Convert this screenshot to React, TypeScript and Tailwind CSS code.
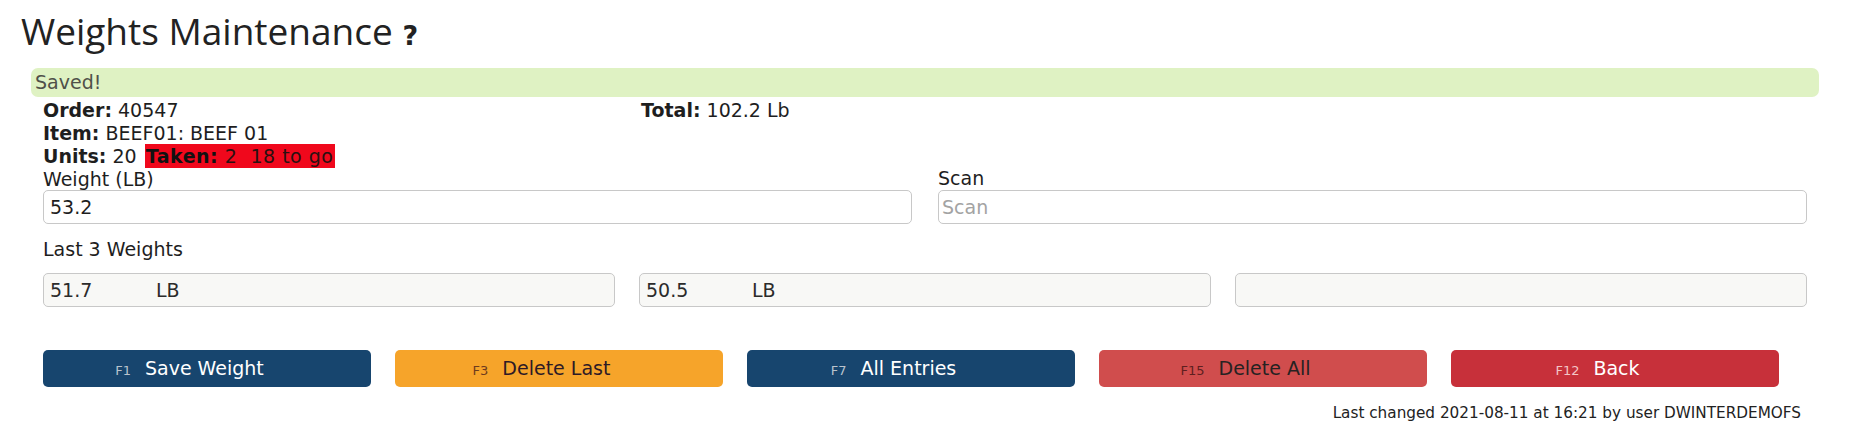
const BUTTONS = [
  { key: 'F1', label: 'Save Weight', bg: 'bg-[#17456e]', keyColor: 'text-[#b9c3cd]', text: 'text-white' },
  { key: 'F3', label: 'Delete Last', bg: 'bg-[#f6a42a]', keyColor: 'text-[#6e3b1e]', text: 'text-[#2e1a26]' },
  { key: 'F7', label: 'All Entries', bg: 'bg-[#17456e]', keyColor: 'text-[#b9c3cd]', text: 'text-white' },
  { key: 'F15', label: 'Delete All', bg: 'bg-[#d04d4d]', keyColor: 'text-[#5e1f1f]', text: 'text-[#262222]' },
  { key: 'F12', label: 'Back', bg: 'bg-[#c7303a]', keyColor: 'text-[#f3c6c6]', text: 'text-white' },
]

const LAST_WEIGHTS = ['51.7', '50.5', '']

export default function App() {
  return (
    <div className="w-[1856px] h-[421px] overflow-hidden bg-white font-['DejaVu_Sans',sans-serif] text-[19px] text-[#1e1e1e]">
      <h1 className="h-[61px] pl-[21px] font-['Open_Sans',sans-serif] text-[37px] leading-[61px] font-normal text-[#222]">
        Weights Maintenance{' '}
        <span className="font-['DejaVu_Sans',sans-serif] font-bold text-[27px] leading-none">?</span>
      </h1>

      <div className="ml-[31px] w-[1788px] mt-[7px]">
        <div className="h-[29px] rounded-[7px] bg-[#dff2c3] pl-[4px] text-[19px] leading-[29px] text-[#4f5049]">
          Saved!
        </div>

        <div className="px-[12px]">
          <div className="mt-[2px] leading-[23px]">
            <div className="flex">
              <div className="w-[598px]">
                <b>Order:</b> 40547
              </div>
              <div>
                <b>Total:</b> 102.2 Lb
              </div>
            </div>
            <div>
              <b>Item:</b> BEEF01: BEEF 01
            </div>
            <div>
              <b>Units:</b> 20{' '}
              <span className="ml-[2px] bg-[#f0081c] py-[1px] pl-[1px] pr-[2px] tracking-[0.5px] text-[#2a1010]">
                <b className="text-[#111]">Taken:</b> 2&nbsp; 18 to go
              </span>
            </div>
          </div>

          <div className="grid grid-cols-2 gap-x-[26px]">
            <label className="block">
              <span className="block leading-[22px]">Weight (LB)</span>
              <div className="h-[34px] rounded-[5px] border border-[#c8c8c8] bg-white pl-[6px] leading-[32px]">
                53.2
              </div>
            </label>
            <label className="block">
              <span className="block leading-[20px]">Scan</span>
              <div className="mt-[2px] h-[34px] rounded-[5px] border border-[#c8c8c8] bg-white pl-[3px] leading-[32px] text-[#a3a3a3]">
                Scan
              </div>
            </label>
          </div>

          <div className="mt-[14px] leading-[23px]">Last 3 Weights</div>
          <div className="mt-[12px] grid grid-cols-3 gap-x-[24px]">
            {LAST_WEIGHTS.map((w, i) => (
              <div
                key={i}
                className="h-[34px] rounded-[5px] border border-[#c8c8c8] bg-[#f8f8f6] pl-[6px] leading-[32px] text-[#2b2b2b]"
              >
                {w && (
                  <>
                    <span className="inline-block w-[106px]">{w}</span>
                    LB
                  </>
                )}
              </div>
            ))}
          </div>

          <div className="mt-[43px] flex gap-[24px]">
            {BUTTONS.map((b) => (
              <button
                key={b.key}
                className={`flex h-[37px] w-[328px] items-baseline justify-center rounded-[5px] pr-[35px] pt-[7px] ${b.bg}`}
              >
                <span className={`mr-[14px] text-[13px] ${b.keyColor}`}>{b.key}</span>
                <span className={`leading-[22px] ${b.text}`}>{b.label}</span>
              </button>
            ))}
          </div>

          <div className="mt-[16px] pr-[6px] text-right text-[15.25px] leading-[20px] text-[#222]">
            Last changed 2021-08-11 at 16:21 by user DWINTERDEMOFS
          </div>
        </div>
      </div>
    </div>
  )
}
